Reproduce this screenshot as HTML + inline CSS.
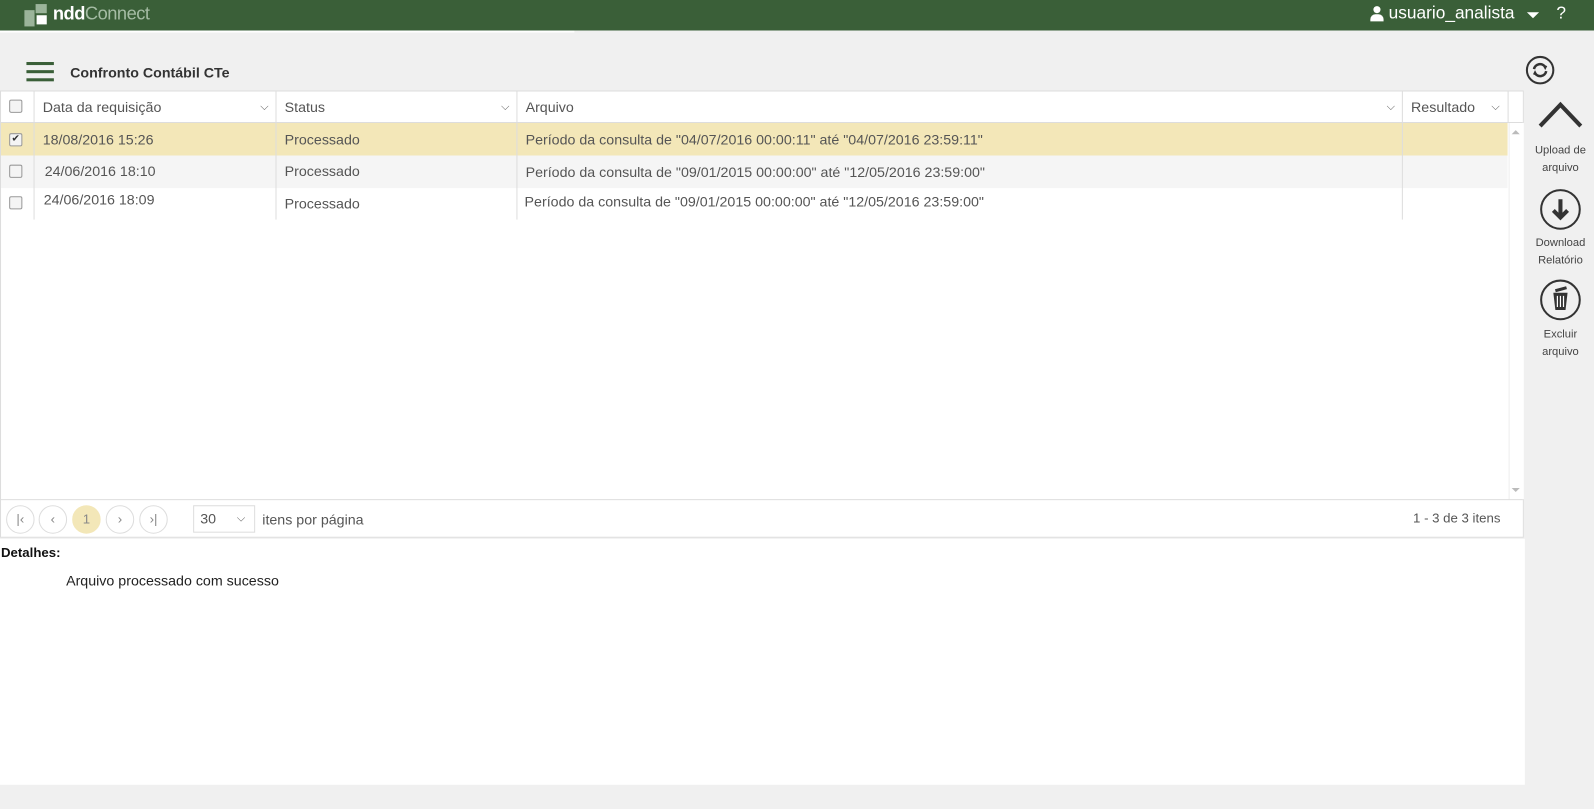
<!DOCTYPE html>
<html><head><meta charset="utf-8"><style>
body{margin:0;width:1594px;height:809px;background:#f0f0f0;font-family:"Liberation Sans",sans-serif;position:relative;overflow:hidden;color:#555}
#w{position:absolute;left:0;top:0;width:1568px;height:796px;transform:scale(1.01658);transform-origin:0 0}
.a{position:absolute}
.hdr{left:0;top:0;width:1568px;height:30px;background:#3a5f38}
.grid{left:0;top:89px;width:1499px;height:440px;background:#fff;border:1px solid #ddd;box-sizing:border-box}
.th{top:89px;height:32px;line-height:32px;font-size:14px;color:#555}
.vl{width:1px;background:#ddd}
.cell{font-size:14px;color:#555}
.cb{width:11px;height:11px;border:1px solid #999;border-radius:2px;background:#f4f4f4}
.pg{width:28px;height:28px;border:1px solid #ddd;border-radius:50%;box-sizing:border-box;text-align:center;line-height:26px;font-size:13px;color:#888;top:497px}
.side{font-size:11px;color:#444;text-align:center;width:60px;left:1505px;line-height:17px}
.circ{width:40px;height:40px;border:2px solid #333;border-radius:50%;box-sizing:border-box;left:1515px}
</style></head><body><div id="w">
<div class="a hdr"></div>
<div class="a" style="left:24px;top:10px;width:10px;height:16px;background:#9bb49a"></div>
<div class="a" style="left:35px;top:4px;width:11px;height:9px;background:#9bb49a"></div>
<div class="a" style="left:36px;top:15px;width:10px;height:9px;background:#fff"></div>
<div class="a" style="left:52px;top:3px;font-size:18px;font-weight:bold;color:#fff;letter-spacing:-0.5px">ndd<span style="font-weight:normal;color:#a5bca4">Connect</span></div>
<div class="a" style="left:1348px;top:6px;width:12px;height:16px">
<div class="a" style="left:3px;top:0;width:7px;height:7px;border-radius:50%;background:#fff"></div>
<div class="a" style="left:0;top:8px;width:13px;height:7px;border-radius:5px 5px 0 0;background:#fff"></div></div>
<div class="a" style="left:1366px;top:3px;font-size:17px;color:#fff">usuario_analista</div>
<div class="a" style="left:1502px;top:12px;width:0;height:0;border:6px solid transparent;border-top:6px solid #fff;border-bottom:0"></div>
<div class="a" style="left:1531px;top:3px;font-size:17px;color:#fff">?</div>
<div class="a" style="left:0;top:30px;width:565px;height:2px;background:#fff"></div>
<div class="a" style="left:26px;top:61px;width:27px;height:3px;background:#3a5f38;box-shadow:0 8px 0 #3a5f38,0 16px 0 #3a5f38"></div>
<div class="a" style="left:69px;top:63px;font-size:14px;font-weight:bold;color:#333">Confronto Contábil CTe</div>
<div class="a" style="left:1501px;top:55px;width:28px;height:28px;border:2px solid #333;border-radius:50%;box-sizing:border-box"><svg width="24" height="24"><path d="M6 11 A6 6 0 0 1 17 9 M18 13 A6 6 0 0 1 7 15" fill="none" stroke="#333" stroke-width="2.5"/><path d="M14 6 L19 8 L17 12 Z M10 18 L5 16 L7 12 Z" fill="#333"/></svg></div>
<div class="a grid"></div>
<div class="a" style="left:1px;top:121px;width:1482px;height:32px;background:#f3e7b8"></div>
<div class="a" style="left:1px;top:153px;width:1482px;height:32px;background:#f5f5f5"></div>
<div class="a" style="left:1px;top:120px;width:1497px;height:1px;background:#ddd"></div>
<div class="a vl" style="left:33px;top:89px;height:127px"></div>
<div class="a vl" style="left:271px;top:89px;height:127px"></div>
<div class="a vl" style="left:508px;top:89px;height:127px"></div>
<div class="a vl" style="left:1379px;top:89px;height:127px"></div>
<div class="a vl" style="left:1483px;top:89px;height:32px"></div>
<div class="a" style="left:1484px;top:121px;width:14px;height:370px;background:#fff;border-left:1px solid #eee"></div>
<div class="a" style="left:1487px;top:128px;border:4px solid transparent;border-bottom:4px solid #bbb;border-top:0"></div>
<div class="a" style="left:1487px;top:480px;border:4px solid transparent;border-top:4px solid #bbb;border-bottom:0"></div>
<div class="a cb" style="left:9px;top:98px"></div>
<div class="a th" style="left:42px">Data da requisição</div><div class="a th" style="left:256px;font-size:11px">⌵</div>
<div class="a th" style="left:280px">Status</div><div class="a th" style="left:493px;font-size:11px">⌵</div>
<div class="a th" style="left:517px">Arquivo</div><div class="a th" style="left:1364px;font-size:11px">⌵</div>
<div class="a th" style="left:1388px">Resultado</div><div class="a th" style="left:1467px;font-size:11px">⌵</div>
<div class="a cb" style="left:9px;top:131px;font-size:10px;line-height:10px;text-align:center;color:#333">✔</div>
<div class="a cb" style="left:9px;top:162px"></div>
<div class="a cb" style="left:9px;top:193px"></div>
<div class="a cell" style="left:42px;top:129px">18/08/2016 15:26</div>
<div class="a cell" style="left:280px;top:129px">Processado</div>
<div class="a cell" style="left:517px;top:129px">Período da consulta de "04/07/2016 00:00:11" até "04/07/2016 23:59:11"</div>
<div class="a cell" style="left:44px;top:160px">24/06/2016 18:10</div>
<div class="a cell" style="left:280px;top:160px">Processado</div>
<div class="a cell" style="left:517px;top:161px">Período da consulta de "09/01/2015 00:00:00" até "12/05/2016 23:59:00"</div>
<div class="a cell" style="left:43px;top:188px">24/06/2016 18:09</div>
<div class="a cell" style="left:280px;top:192px">Processado</div>
<div class="a cell" style="left:516px;top:190px">Período da consulta de "09/01/2015 00:00:00" até "12/05/2016 23:59:00"</div>
<div class="a" style="left:1px;top:491px;width:1497px;height:1px;background:#ddd"></div>
<div class="a pg" style="left:6px">|‹</div>
<div class="a pg" style="left:38px">‹</div>
<div class="a pg" style="left:71px;background:#f3e7b8;border-color:#f3e7b8">1</div>
<div class="a pg" style="left:104px">›</div>
<div class="a pg" style="left:137px">›|</div>
<div class="a" style="left:190px;top:497px;width:61px;height:27px;border:1px solid #ddd;box-sizing:border-box;font-size:14px;line-height:25px;padding-left:6px;color:#555">30<span style="position:absolute;left:42px;font-size:11px">⌵</span></div>
<div class="a cell" style="left:258px;top:503px">itens por página</div>
<div class="a cell" style="left:1390px;top:502px;font-size:13px">1 - 3 de 3 itens</div>
<div class="a" style="left:0;top:530px;width:1500px;height:242px;background:#fff"></div>
<div class="a" style="left:1px;top:536px;font-size:13px;font-weight:bold;color:#111">Detalhes:</div>
<div class="a" style="left:65px;top:563px;font-size:14px;color:#222">Arquivo processado com sucesso</div>
<svg class="a" style="left:1512px;top:98px" width="46" height="30"><path d="M3 26 L23 5 L43 26" fill="none" stroke="#333" stroke-width="4"/></svg>
<div class="a side" style="top:140px">Upload de<br>arquivo</div>
<div class="a circ" style="top:186px"><svg width="36" height="36"><path d="M18 8 V26 M11 19 L18 26 L25 19" fill="none" stroke="#333" stroke-width="4"/></svg></div>
<div class="a side" style="top:231px">Download<br>Relatório</div>
<div class="a circ" style="top:275px"><svg width="36" height="36"><path d="M11 11 L25 11 L23 28 L13 28 Z" fill="#333"/><path d="M15 14 V25 M18 14 V25 M21 14 V25" stroke="#fff" stroke-width="1.2"/><path d="M13 9 L24 6" stroke="#333" stroke-width="3"/></svg></div>
<div class="a side" style="top:321px">Excluir<br>arquivo</div>
</div></body></html>
